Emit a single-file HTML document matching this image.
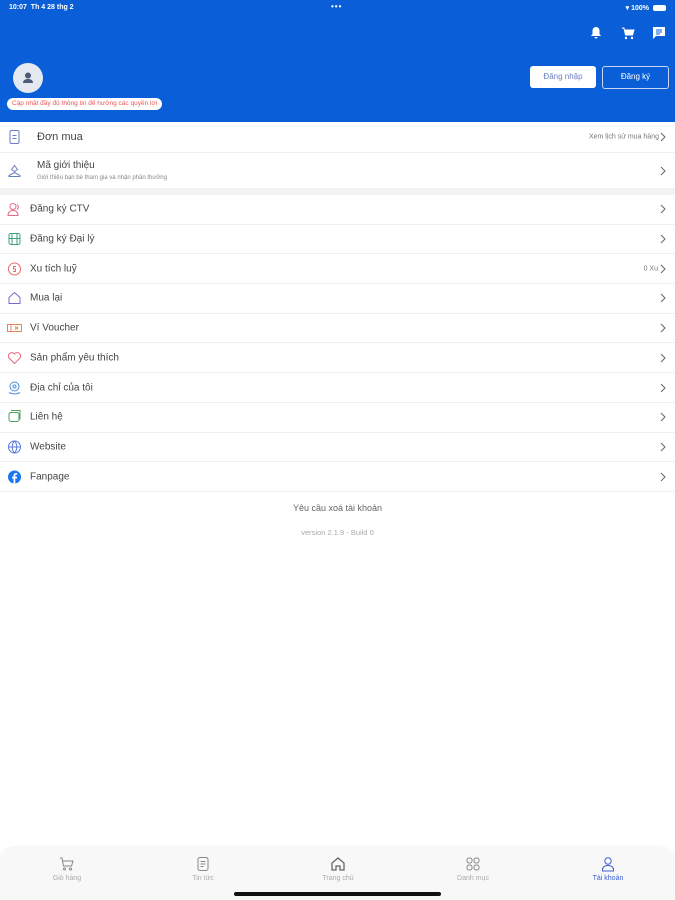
<!DOCTYPE html><html><head><meta charset="utf-8"><style>
*{margin:0;padding:0;box-sizing:border-box}
body{width:675px;height:900px;background:#fff;font-family:"Liberation Sans",sans-serif;position:relative;overflow:hidden;color:#333}
.hdr{position:absolute;left:0;top:0;width:675px;height:122px;background:#0a5fd8;color:#fff}
.row{position:absolute;left:0;width:675px;border-bottom:1px solid #eee;font-size:10px;color:#444}
.row .ic{position:absolute;left:7px;top:50%;transform:translateY(-50%);width:15px;height:15px}
.row .t{position:absolute;left:30px;top:50%;transform:translateY(-50%)}
.chev{position:absolute;right:9px;top:50%;transform:translateY(-50%);width:6px;height:10px}
.nav{position:absolute;top:848px;left:0;width:675px;height:52px;background:#f8f8f8;border-radius:14px 14px 0 0;box-shadow:0 -1px 3px rgba(0,0,0,.06)}
.ni{position:absolute;top:8px;width:80px;text-align:center;font-size:7px;color:#aaa}
.ni svg{display:block;margin:0 auto 3px}
</style></head><body>
<div class="hdr">
<div style="position:absolute;left:9px;top:4px;font-size:7px;font-weight:bold">10:07 &nbsp;Th 4 28 thg 2</div>
<div style="position:absolute;left:331px;top:2px;font-size:8px;font-weight:bold;letter-spacing:1px">•••</div>
<div style="position:absolute;right:26px;top:4px;font-size:7px;font-weight:bold">▾ 100%</div>
<div style="position:absolute;right:9px;top:5px;width:13px;height:6px;background:#fff;border-radius:2px"></div>
<svg style="position:absolute;left:589px;top:26px" width="14" height="14" viewBox="0 0 14 14"><path d="M7 1C4.5 1 3.5 3 3.5 5v3L2 10h10l-1.5-2V5C10.5 3 9.5 1 7 1z M5.5 11a1.5 1.5 0 0 0 3 0z" fill="#fff"/></svg>
<svg style="position:absolute;left:621px;top:26px" width="14" height="14" viewBox="0 0 14 14"><path d="M1 2h2l1.5 7h7L13 4H4" fill="#fff" stroke="#fff"/><circle cx="5" cy="12" r="1.2" fill="#fff"/><circle cx="11" cy="12" r="1.2" fill="#fff"/></svg>
<svg style="position:absolute;left:652px;top:26px" width="14" height="14" viewBox="0 0 14 14"><path d="M1 1h12v9H4l-3 3z" fill="#fff"/><path d="M4 4h6M4 6h6M4 8h4" stroke="#0a5fd8"/></svg>
<div style="position:absolute;left:13px;top:63px;width:30px;height:30px;border-radius:50%;background:#e4e8ef"><svg width="30" height="30" viewBox="0 0 30 30"><circle cx="15" cy="12.5" r="3" fill="#4a5a78"/><path d="M10 20c0-3 2.5-4 5-4s5 1 5 4z" fill="#4a5a78"/></svg></div>
<div style="position:absolute;left:7px;top:98px;height:12px;padding:0 5px;background:#fff;border-radius:6px;color:#e55;font-size:6.5px;line-height:12px">Cập nhật đầy đủ thông tin để hưởng các quyền lợi</div>
<div style="position:absolute;left:530px;top:66px;width:66px;height:22px;background:#fff;border-radius:3px;color:#6a7fc0;font-size:8px;text-align:center;line-height:22px">Đăng nhập</div>
<div style="position:absolute;left:602px;top:66px;width:67px;height:23px;border:1.5px solid #c8d6f2;border-radius:3px;font-size:8px;text-align:center;line-height:20px">Đăng ký</div>
</div>
<div class="row" style="top:122px;height:31px;font-size:11px">
<svg class="ic" viewBox="0 0 15 15"><rect x="3" y="1" width="9" height="13" rx="1.5" fill="none" stroke="#6a7fc0"/><path d="M5.5 6h4M5.5 9h4" stroke="#6a7fc0"/></svg>
<div class="t" style="left:37px">Đơn mua</div>
<div style="position:absolute;right:16px;top:50%;transform:translateY(-50%);font-size:7px;color:#777">Xem lịch sử mua hàng</div>
<svg class="chev" viewBox="0 0 6 10"><path d="M1 1l4 4-4 4" fill="none" stroke="#666"/></svg></div>
<div class="row" style="top:153px;height:35px;border:0">
<svg class="ic" viewBox="0 0 15 15"><path d="M7.5 2l3 4-3 2-3-2zM2 12l5.5-3 5.5 3v1H2z" fill="none" stroke="#6a7fc0"/></svg>
<div style="position:absolute;left:37px;top:7px;font-size:10px">Mã giới thiệu</div>
<div style="position:absolute;left:37px;top:22px;font-size:6px;color:#888">Giới thiệu bạn bè tham gia và nhận phần thưởng</div>
<svg class="chev" viewBox="0 0 6 10"><path d="M1 1l4 4-4 4" fill="none" stroke="#666"/></svg></div>
<div style="position:absolute;top:188px;left:0;width:675px;height:7px;background:#f3f3f3"></div>
<div id="list"></div>
<div style="position:absolute;top:503px;width:675px;text-align:center;font-size:9px;color:#666">Yêu cầu xoá tài khoản</div>
<div style="position:absolute;top:528px;width:675px;text-align:center;font-size:7.5px;color:#aaa">version 2.1.9 - Build 0</div>
<script>
var items=[["Đăng ký CTV","#e86a8a",'<circle cx="6" cy="5" r="3"/><path d="M1 14c0-3 2-5 5-5s5 2 5 5zM10 3a3 3 0 0 1 0 5"/>'],
["Đăng ký Đại lý","#3aa07a",'<rect x="2" y="2" width="11" height="11" rx="2"/><path d="M5 2v11M10 2v11M2 7h11"/>'],
["Xu tích luỹ","#e86a6a",'<circle cx="7.5" cy="7.5" r="6"/><path d="M9 5H6.5v2.5h2v2.5H6"/>'],
["Mua lại","#7a6ad0",'<path d="M2 13V7l5.5-5 5.5 5v6z"/>'],
["Ví Voucher","#e8845a",'<rect x="0.5" y="4" width="14" height="7"/><path d="M4 4v7M8 6l3 3M11 6l-3 3"/>'],
["Sản phẩm yêu thích","#e86a7a",'<path d="M7.5 13L2 7.5a3 3 0 0 1 5.5-4 3 3 0 0 1 5.5 4z"/>'],
["Địa chỉ của tôi","#4a90d8",'<circle cx="7.5" cy="6" r="4.5"/><circle cx="7.5" cy="6" r="1.5"/><path d="M2 12q5.5 3 11 0"/>'],
["Liên hệ","#4aa060",'<rect x="2" y="3" width="10" height="9" rx="2"/><path d="M4 1h9v9"/>'],
["Website","#5a7ad8",'<circle cx="7.5" cy="7.5" r="6"/><path d="M1.5 7.5h12M7.5 1.5c-3 3-3 9 0 12M7.5 1.5c3 3 3 9 0 12"/>'],
["Fanpage","#1877f2",'']];
var h="";items.forEach(function(it,i){var top=195+i*29.7;
var ic=it[0]=="Fanpage"?'<svg class="ic" viewBox="0 0 15 15"><circle cx="7.5" cy="7.5" r="6.5" fill="#1877f2"/><path d="M8.3 14V9h1.6l.3-1.8H8.3V6.2c0-.5.2-.9.9-.9h1V3.7c-.2 0-.8-.1-1.4-.1-1.4 0-2.3.8-2.3 2.4v1.3H5V9h1.5v5z" fill="#fff"/></svg>':'<svg class="ic" viewBox="0 0 15 15" fill="none" stroke="'+it[1]+'" stroke-width="1">'+it[2]+'</svg>';
h+='<div class="row" style="top:'+top+'px;height:29.7px">'+ic+'<div class="t">'+it[0]+'</div>'+(i==2?'<div style="position:absolute;right:17px;top:50%;transform:translateY(-50%);font-size:7px;color:#777">0 Xu</div>':'')+'<svg class="chev" viewBox="0 0 6 10"><path d="M1 1l4 4-4 4" fill="none" stroke="#666"/></svg></div>';});
document.getElementById("list").outerHTML=h;
</script>
<div class="nav">
<div class="ni" style="left:27px"><svg width="16" height="16" viewBox="0 0 16 16" fill="none" stroke="#888"><path d="M1 2h2l1.5 8h8L14 5H4"/><circle cx="5.5" cy="13" r="1"/><circle cx="11.5" cy="13" r="1"/></svg>Giỏ hàng</div>
<div class="ni" style="left:163px"><svg width="16" height="16" viewBox="0 0 16 16" fill="none" stroke="#888"><rect x="3" y="1.5" width="10" height="13" rx="2"/><path d="M5.5 5.5h5M5.5 8h5M5.5 10.5h3"/></svg>Tin tức</div>
<div class="ni" style="left:298px"><svg width="16" height="16" viewBox="0 0 16 16" fill="none" stroke="#666" stroke-width="1.3"><path d="M2 14V7l6-5 6 5v7h-4v-4H6v4z"/></svg>Trang chủ</div>
<div class="ni" style="left:433px"><svg width="16" height="16" viewBox="0 0 16 16" fill="none" stroke="#888"><rect x="2" y="2" width="5" height="5" rx="2"/><rect x="9" y="2" width="5" height="5" rx="2"/><rect x="2" y="9" width="5" height="5" rx="2"/><rect x="9" y="9" width="5" height="5" rx="2"/></svg>Danh mục</div>
<div class="ni" style="left:568px;color:#3a5fd0"><svg width="16" height="16" viewBox="0 0 16 16" fill="none" stroke="#3a5fd0"><circle cx="8" cy="5" r="3.2"/><path d="M2.5 15v-1.5c0-2.5 2.5-4 5.5-4s5.5 1.5 5.5 4V15z"/></svg>Tài khoản</div>
<div style="position:absolute;left:234px;top:44px;width:207px;height:4px;border-radius:2px;background:#111"></div>
</div>
</body></html>
